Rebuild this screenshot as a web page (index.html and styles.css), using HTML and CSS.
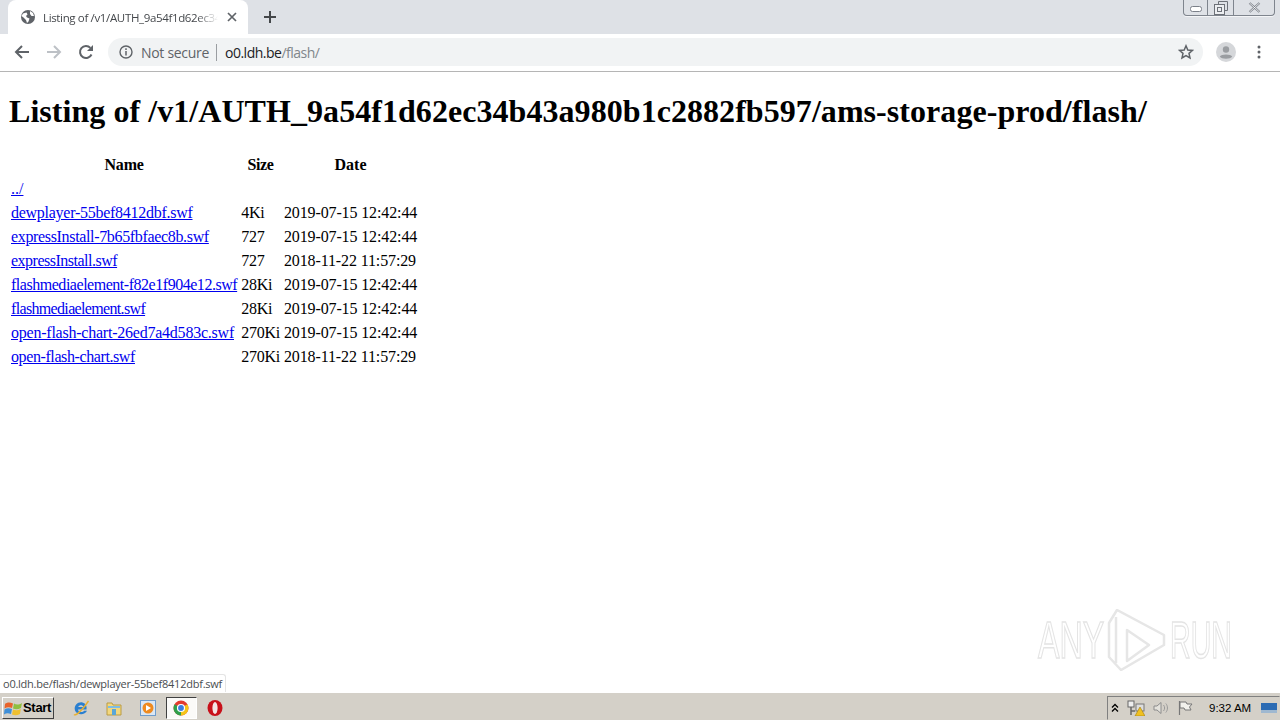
FILE: index.html
```html
<!DOCTYPE html>
<html lang="en">
<head>
<meta charset="utf-8">
<title>Listing of /v1/AUTH_9a54f1d62ec34b43a980b1c2882fb597/ams-storage-prod/flash/</title>
<link rel="stylesheet" href="styles.css">
</head>
<body>
<div class="screen">
  <header class="tabstrip">
    <div class="tab">
      <svg class="favicon" width="16" height="16" viewBox="0 0 16 16"><circle cx="8" cy="8" r="7" fill="#5f6368"/><path d="M3 4.500 6.500 3.500 7.500 5.500 6 7 7 8.500 9.500 9.500 8.500 12.500 7 14 6 11 3.500 8.500 1.500 7ZM10 2 13 4 14 7 11.500 7 10 5Z" fill="#fff"/></svg>
      <span class="tab-title">Listing of /v1/AUTH_9a54f1d62ec34b43a980b1c2882fb597/ams-storage-prod/flash/</span>
      <svg class="tab-close" width="10" height="10" viewBox="0 0 10 10"><path d="M1 1 9 9M9 1 1 9" stroke="#5f6368" stroke-width="1.700"/></svg>
    </div>
    <svg class="newtab" width="12" height="12" viewBox="0 0 12 12"><path d="M6 0V12M0 6H12" stroke="#44474a" stroke-width="2"/></svg>
    <div class="winctl">
      <span class="winbtn win-min"><svg width="12" height="6" viewBox="0 0 12 6"><rect x=".5" y=".5" width="11" height="5" rx="2" fill="#fff" stroke="#7b8089"/></svg></span>
      <span class="winbtn win-max"><svg width="14" height="14" viewBox="0 0 14 14"><path d="M4.500 3V.5H13.500V9.500H11" fill="none" stroke="#6d7178"/><rect x=".5" y="3.500" width="10" height="10" fill="#eceef1" stroke="#6d7178"/><rect x="3.500" y="6.500" width="4" height="4" fill="none" stroke="#6d7178"/></svg></span>
      <span class="winbtn win-close"><svg width="13" height="11" viewBox="0 0 13 11"><path d="M1.500 1 11.500 10M11.500 1 1.500 10" stroke="#7b8089" stroke-width="2.200"/><path d="M1.500 1 11.500 10M11.500 1 1.500 10" stroke="#fff" stroke-width=".8"/></svg></span>
    </div>
  </header>

  <nav class="toolbar">
    <svg class="navicon" width="16" height="16" viewBox="0 0 16 16"><path d="M15 8H2M8 2 2 8 8 14" fill="none" stroke="#5f6368" stroke-width="2"/></svg>
    <svg class="navicon" width="16" height="16" viewBox="0 0 16 16"><path d="M1 8H14M8 2 14 8 8 14" fill="none" stroke="#bdc1c6" stroke-width="2"/></svg>
    <svg class="navicon" width="16" height="16" viewBox="0 0 16 16"><path d="M13.500 10.500A6 6 0 1 1 12.400 3.900" fill="none" stroke="#5f6368" stroke-width="2"/><path d="M15 1V7H9Z" fill="#5f6368"/></svg>
    <div class="omnibox">
      <svg class="info" width="14" height="14" viewBox="0 0 14 14"><circle cx="7" cy="7" r="6" fill="none" stroke="#5f6368" stroke-width="1.400"/><path d="M7 6V10.500M7 3.300V5" stroke="#5f6368" stroke-width="1.500"/></svg>
      <span class="secure">Not secure</span>
      <span class="sep"></span>
      <span class="url">o0.ldh.be<span class="url-path">/flash/</span></span>
      <svg class="star" width="16" height="16" viewBox="0 0 16 16"><path d="M8 1.800 9.800 6 14.500 6.400 11 9.400 12 14 8 11.600 4 14 5 9.400 1.500 6.400 6.200 6Z" fill="none" stroke="#5f6368" stroke-width="1.500"/></svg>
    </div>
    <svg class="avatar" width="20" height="20" viewBox="0 0 20 20"><circle cx="10" cy="10" r="10" fill="#d5d7da"/><circle cx="10" cy="7.500" r="3.200" fill="#9a9da1"/><path d="M3.800 14.500C5 11.800 15 11.800 16.200 14.500 14.500 17.500 5.500 17.500 3.800 14.500Z" fill="#9a9da1"/></svg>
    <svg class="menu" width="4" height="14" viewBox="0 0 4 14"><circle cx="2" cy="2" r="1.500" fill="#5f6368"/><circle cx="2" cy="7" r="1.500" fill="#5f6368"/><circle cx="2" cy="12" r="1.500" fill="#5f6368"/></svg>
  </nav>

  <main class="page">
    <h1>Listing of /v1/AUTH_9a54f1d62ec34b43a980b1c2882fb597/ams-storage-prod/flash/</h1>
    <table>
      <tr><th class="col-name">Name</th><th class="col-size">Size</th><th class="col-date">Date</th></tr>
      <tr><td><a href="#">../</a></td><td></td><td></td></tr>
      <tr><td><a class="tight-a" href="#">dewplayer-55bef8412dbf.swf</a></td><td class="size">4Ki</td><td class="date">2019-07-15 12:42:44</td></tr>
      <tr><td><a class="tight-b" href="#">expressInstall-7b65fbfaec8b.swf</a></td><td class="size">727</td><td class="date">2019-07-15 12:42:44</td></tr>
      <tr><td><a class="tight-c" href="#">expressInstall.swf</a></td><td class="size">727</td><td class="date">2018-11-22 11:57:29</td></tr>
      <tr><td><a class="tight-d" href="#">flashmediaelement-f82e1f904e12.swf</a></td><td class="size">28Ki</td><td class="date">2019-07-15 12:42:44</td></tr>
      <tr><td><a class="tight-e" href="#">flashmediaelement.swf</a></td><td class="size">28Ki</td><td class="date">2019-07-15 12:42:44</td></tr>
      <tr><td><a class="tight-f" href="#">open-flash-chart-26ed7a4d583c.swf</a></td><td class="size">270Ki</td><td class="date">2019-07-15 12:42:44</td></tr>
      <tr><td><a class="tight-g" href="#">open-flash-chart.swf</a></td><td class="size">270Ki</td><td class="date">2018-11-22 11:57:29</td></tr>
    </table>
    <div class="watermark">
      <span class="wm-box"><span class="wm-text">ANY</span></span>
      <svg class="wm-logo" width="60" height="62" viewBox="0 0 60 62"><path d="M2 14V48L14 61 57 36V26L10 1ZM9 8V54M20 21V52L42 36Z" fill="none" stroke="#e6e6e6" stroke-width="2.500" stroke-linejoin="round"/></svg>
      <span class="wm-box wm-box-run"><span class="wm-text wm-run">RUN</span></span>
    </div>
    <div class="status">o0.ldh.be/flash/dewplayer-55bef8412dbf.swf</div>
  </main>

  <footer class="taskbar">
    <button class="start">
      <svg width="19" height="18" viewBox="0 0 19 18"><path d="M1 5C3 3 6 3 9 4.500L8 9C5.500 8 3 8 .5 9.500Z" fill="#e8632b"/><path d="M10 4.500C12 6 15 6 18 4L17 9C14 10.500 11.500 10.500 9 9.500Z" fill="#8fbf3f"/><path d="M.5 10.500C3 9 5 9 8 10L7 15C4.500 14 2 14 0 15.500Z" fill="#3f8fd8"/><path d="M9 10.500C11.500 11.500 14 11.500 16.800 10L16 15C13 16.500 10.500 16.500 8 15.500Z" fill="#f0c030"/></svg>
      <span>Start</span>
    </button>
    <div class="quick">
      <span class="task"><svg width="18" height="18" viewBox="0 0 18 18"><path d="M14.500 10.500H6C6.500 13.500 10.500 13.800 12.300 11.800H15C13 16.500 5 16.500 3 11.500 1.500 6 6.500 2.500 10.500 3.500 14 4.300 15 7.500 14.500 10.500ZM6.200 8H11.500C11 5.500 7 5.500 6.200 8Z" fill="#2a7fd0"/><path d="M2 15.500C4 17.500 12 9 16.500 2" fill="none" stroke="#e8b030" stroke-width="1.400"/></svg></span>
      <span class="task"><svg width="18" height="18" viewBox="0 0 18 18"><path d="M2 4H7L8 6H16V16H2Z" fill="#f3d77d" stroke="#b99b45"/><rect x="7" y="10" width="4" height="6" fill="#5aa6d8"/><rect x="3" y="7" width="12" height="2" fill="#7dbde6"/></svg></span>
      <span class="task"><svg width="18" height="18" viewBox="0 0 18 18"><rect x="1.500" y="1.500" width="15" height="15" fill="#dbe7f4" stroke="#6f9ccc"/><circle cx="9" cy="9" r="5.500" fill="#ef8a1f"/><path d="M7 6 12 9 7 12Z" fill="#fff"/></svg></span>
      <span class="task task-active"><svg width="16" height="16" viewBox="0 0 16 16"><circle cx="8" cy="8" r="7.500" fill="#e33b2e"/><path d="M8 8 14.500 4.300A7.500 7.500 0 0 1 8 15.500Z" fill="#f5c518"/><path d="M8 8 8 15.500A7.500 7.500 0 0 1 1.500 4.300Z" fill="#2fa04b"/><circle cx="8" cy="8" r="3.500" fill="#3b7de0" stroke="#fff" stroke-width="1.200"/></svg></span>
      <span class="task"><svg width="16" height="18" viewBox="0 0 16 18"><ellipse cx="8" cy="9" rx="7.500" ry="8" fill="#c8101a"/><ellipse cx="8" cy="9" rx="2.600" ry="6" fill="#f4e4e4"/></svg></span>
    </div>
    <div class="tray">
      <svg width="8" height="10" viewBox="0 0 8 10"><path d="M1 4.500 4 1.500 7 4.500M1 8.500 4 5.500 7 8.500" fill="none" stroke="#000" stroke-width="1.300"/></svg>
      <svg width="18" height="16" viewBox="0 0 18 16"><rect x="1" y="1" width="6" height="6" fill="#eee" stroke="#666"/><path d="M4 7V15M4 11H8" stroke="#666" stroke-width="1.500"/><rect x="9" y="4" width="8" height="7" fill="#ddd" stroke="#777"/><path d="M13 7 18 16H8Z" fill="#f0c020" stroke="#a07c10" stroke-width=".6"/></svg>
      <svg width="16" height="14" viewBox="0 0 16 14"><path d="M1 5H4L8 1.500V12.500L4 9H1Z" fill="#e4e2dc" stroke="#8c8c8c"/><path d="M10.500 4C12 6 12 8 10.500 10M12.800 2.500C15 5 15 9 12.800 11.500" fill="none" stroke="#9a9a9a"/></svg>
      <svg width="16" height="16" viewBox="0 0 16 16"><path d="M2.500 1V15" stroke="#777" stroke-width="1.200"/><path d="M3 2H9L10 4H15L12.500 7 14 10H8L7 8H3Z" fill="#f2f1ec" stroke="#777"/></svg>
      <span class="clock">9:32 AM</span>
      <svg class="showdesk" width="16" height="10" viewBox="0 0 16 10"><rect width="16" height="10" fill="#2c6bb3"/><rect y="7" width="16" height="3" fill="#9fb8d0"/></svg>
    </div>
  </footer>
</div>
</body>
</html>
```

FILE: styles.css
```css
html, body { margin: 0; padding: 0; height: 100%; overflow: hidden; background: #fff; }
.screen { display: flex; flex-direction: column; height: 720px; width: 1280px; font-family: "Open Sans", "Liberation Sans", sans-serif; }

.tabstrip { height: 34px; background: #dee1e6; display: flex; align-items: center; padding-left: 8px; position: relative; flex: none; }
.tab { width: 240px; height: 34px; background: #fff; border-radius: 8px 8px 0 0; display: flex; align-items: center; box-sizing: border-box; padding: 0 11px 0 12px; }
.favicon { flex: none; }
.tab-title { margin-left: 7px; width: 175px; white-space: nowrap; overflow: hidden; font-size: 11.500px; letter-spacing: -.35px; color: #45484c; -webkit-mask-image: linear-gradient(to right, #000 88%, transparent); mask-image: linear-gradient(to right, #000 88%, transparent); }
.tab-close { flex: none; margin-left: auto; }
.newtab { margin-left: 16px; }
.winctl { position: absolute; right: 5px; top: 0; width: 92px; height: 16px; box-sizing: border-box; display: flex; border: 1px solid #7e848d; border-top: 0; border-radius: 0 0 4px 4px; box-shadow: 0 1px 0 #f4f5f7; }
.winbtn { display: flex; align-items: center; justify-content: center; border-right: 1px solid #7e848d; }
.winbtn svg { display: block; }
.win-min { width: 24px; padding-top: 3px; box-sizing: border-box; }
.win-max { width: 25px; }
.win-close { flex: 1; border-right: 0; }

.toolbar { height: 36px; padding-bottom: 1px; flex: none; background: #fff; border-bottom: 1px solid #b5b5b5; display: flex; align-items: center; padding-left: 14px; }
.navicon { flex: none; margin-right: 16px; }
.omnibox { width: 1095px; height: 28px; margin-left: -2px; background: #f1f3f4; border-radius: 14px; display: flex; align-items: center; padding: 0 9px 0 10px; box-sizing: border-box; flex: none; }
.info { flex: none; margin-left: 1px; }
.secure { margin-left: 8px; font-size: 14px; color: #5f6368; letter-spacing: -.3px; }
.sep { width: 1px; height: 17px; background: #9a9da1; margin: 0 8px 0 7px; }
.url { font-size: 14px; color: #202124; letter-spacing: -.5px; }
.url-path { color: #80868b; }
.star { margin-left: auto; }
.avatar { flex: none; margin-left: 13px; }
.menu { flex: none; margin-left: 21px; }

.page { flex: 1; min-height: 0; position: relative; overflow: hidden; font-family: "Liberation Serif", "Times New Roman", serif; color: #000; font-size: 16px; padding: .05px 8px 0; }
h1 { font-size: 32px; font-weight: bold; margin: 21.440px 0 21.440px 1px; line-height: 37px; white-space: nowrap; letter-spacing: .055px; }
table { border-spacing: 2px; border-collapse: separate; }
th, td { padding: 2px 1px; line-height: 18px; white-space: nowrap; }
th { font-weight: bold; text-align: center; }
td { text-align: left; }
.col-name { letter-spacing: -.2px; }
.col-size { letter-spacing: -.4px; }
.size { letter-spacing: -.25px; }
.date { letter-spacing: -.12px; }
a { color: #0000ee; text-decoration: underline; }
.tight-a { letter-spacing: -.27px; }
.tight-b { letter-spacing: -.34px; }
.tight-c { letter-spacing: -.5px; }
.tight-d { letter-spacing: -.47px; }
.tight-e { letter-spacing: -.66px; }
.tight-f { letter-spacing: -.23px; }
.tight-g { letter-spacing: -.4px; }

.watermark { position: absolute; left: 1038px; top: 537px; display: flex; align-items: center; gap: 7px; height: 62px; }
.wm-box { display: block; width: 62px; height: 62px; overflow: visible; }
.wm-box-run { margin-left: -4px; }
.wm-text { display: block; font-family: "Liberation Sans", sans-serif; font-size: 52px; line-height: 62px; color: transparent; -webkit-text-stroke: 1.500px #e4e4e4; transform: scaleX(.62); transform-origin: left center; }
.wm-run { transform: scaleX(.55); }
.status { position: absolute; left: 0; bottom: 0; height: 18px; box-sizing: border-box; padding: 0 3px; line-height: 17px; font-family: "Open Sans", "Liberation Sans", sans-serif; font-size: 11px; letter-spacing: -.24px; color: #4a4d50; background: #fff; border: 1px solid #e4e4e4; border-left: 0; border-bottom: 0; border-radius: 0 3px 0 0; white-space: nowrap; }

.taskbar { height: 28px; flex: none; box-sizing: border-box; background: #d4d0c8; border-top: 1px solid #fff; display: flex; align-items: center; padding: 2px 0 0 2px; }
.start { width: 52px; height: 22px; padding: 0 0 0 1px; margin: 0; display: flex; align-items: center; gap: 0; background: #d4d0c8; border: 1px solid; border-color: #fff #404040 #404040 #fff; font-family: "Liberation Sans", Arial, sans-serif; font-size: 13px; font-weight: bold; letter-spacing: -.3px; color: #000; box-sizing: border-box; }
.quick { display: flex; align-items: center; margin-left: 11px; gap: 2.500px; }
.task { width: 31px; height: 22px; display: flex; align-items: center; justify-content: center; box-sizing: border-box; }
.task-active { background: #fbfaf8; border: 1px solid; border-color: #404040 #fff #fff #404040; }
.tray { margin-left: auto; width: 173px; height: 24px; box-sizing: border-box; border: 1px solid; border-color: #808080 #d4d0c8 #d4d0c8 #808080; display: flex; align-items: center; padding-left: 3px; gap: 8px; }
.clock { font-family: "Liberation Sans", Arial, sans-serif; font-size: 11.500px; color: #000; margin-left: 8px; white-space: nowrap; }
.showdesk { margin-left: 2px; }
```
